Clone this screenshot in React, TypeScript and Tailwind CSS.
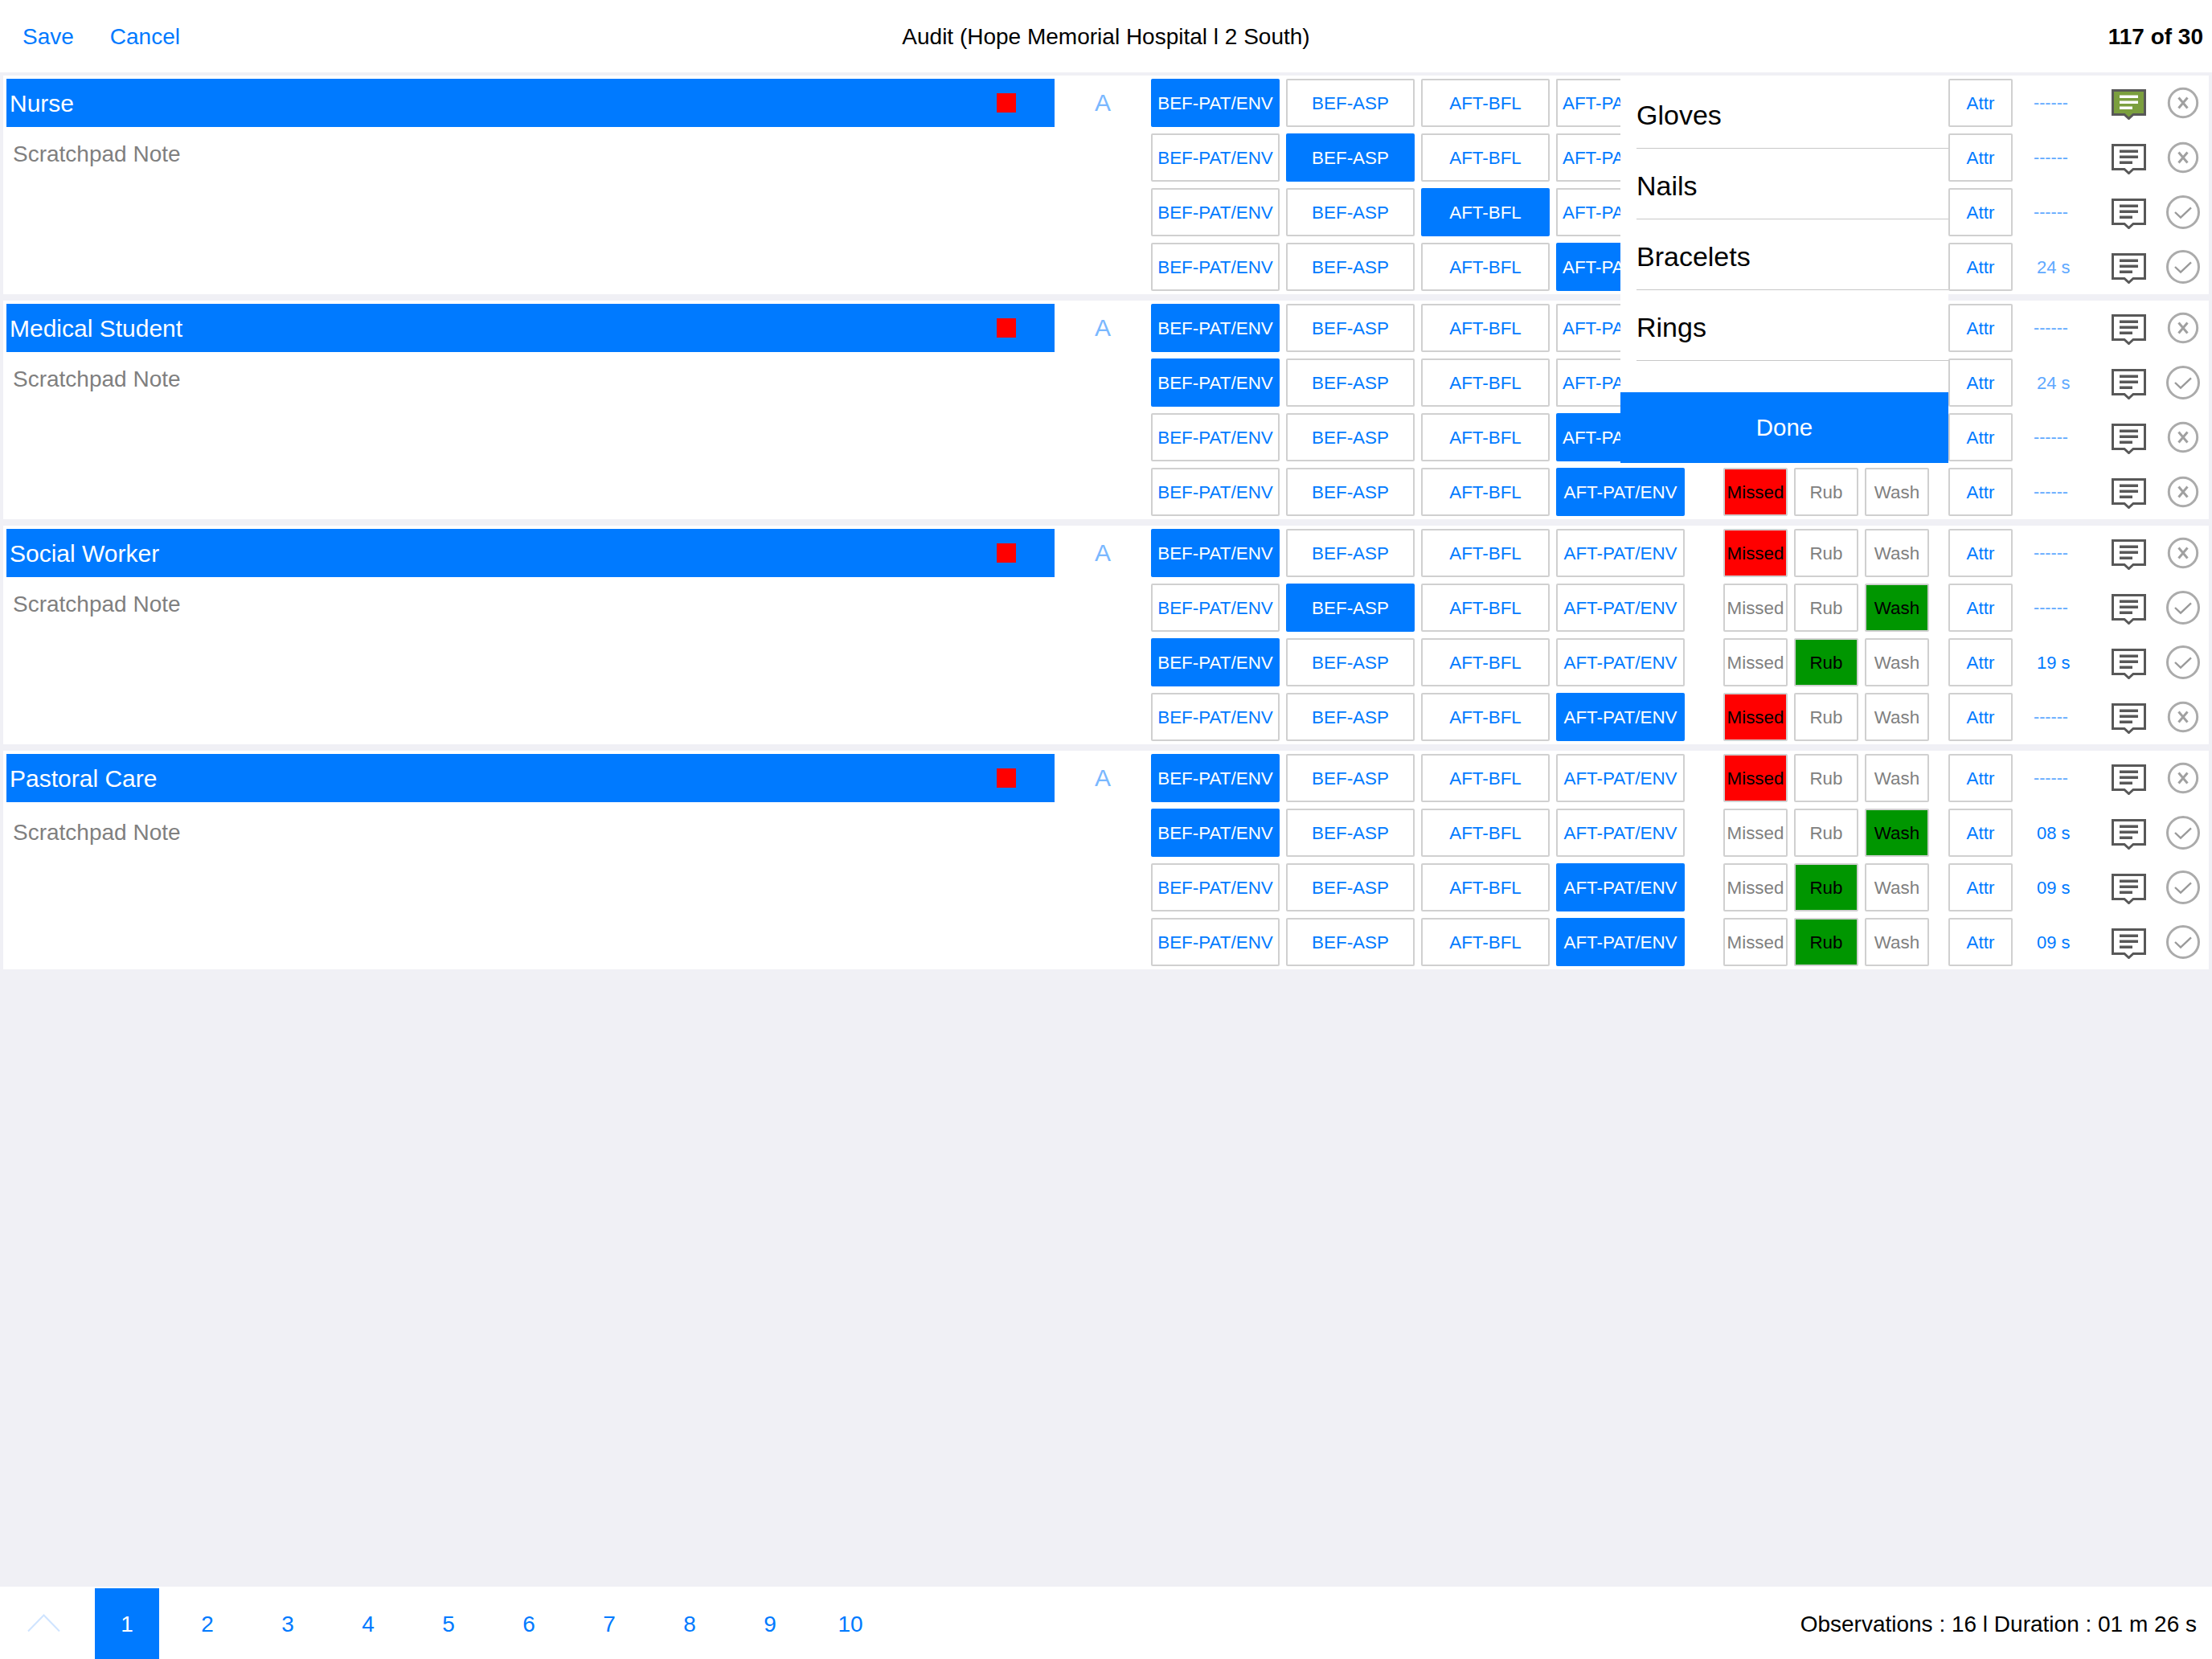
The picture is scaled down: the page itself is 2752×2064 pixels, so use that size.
const ACTIONS = ['BEF-PAT/ENV', 'BEF-ASP', 'AFT-BFL', 'AFT-PAT/ENV'];
const pages = ['1', '2', '3', '4', '5', '6', '7', '8', '9', '10'];

type Row = {
  action: number;
  status: 'Missed' | 'Rub' | 'Wash';
  time?: string;
  faded?: boolean;
  ok?: boolean;
  noted?: boolean;
  covered?: boolean; // sits under the checklist popover
};

const cards: { title: string; rows: Row[]; noteClass: string }[] = [
  {
    title: 'Nurse',
    noteClass: 'mt-[17px]',
    rows: [
      { action: 0, status: 'Missed', noted: true, covered: true },
      { action: 1, status: 'Missed', covered: true },
      { action: 2, status: 'Rub', ok: true, covered: true },
      { action: 3, status: 'Rub', time: '24 s', faded: true, ok: true, covered: true },
    ],
  },
  {
    title: 'Medical Student',
    noteClass: 'mt-[17px]',
    rows: [
      { action: 0, status: 'Missed', covered: true },
      { action: 0, status: 'Rub', time: '24 s', faded: true, ok: true, covered: true },
      { action: 3, status: 'Missed', covered: true },
      { action: 3, status: 'Missed' },
    ],
  },
  {
    title: 'Social Worker',
    noteClass: 'mt-[17px]',
    rows: [
      { action: 0, status: 'Missed' },
      { action: 1, status: 'Wash', ok: true },
      { action: 0, status: 'Rub', time: '19 s', ok: true },
      { action: 3, status: 'Missed' },
    ],
  },
  {
    title: 'Pastoral Care',
    noteClass: 'mt-[21px]',
    rows: [
      { action: 0, status: 'Missed' },
      { action: 0, status: 'Wash', time: '08 s', ok: true },
      { action: 3, status: 'Rub', time: '09 s', ok: true },
      { action: 3, status: 'Rub', time: '09 s', ok: true },
    ],
  },
];

function CommentIcon({ noted }: { noted?: boolean }) {
  const lines = noted ? '#ffffff' : '#585858';
  return (
    <svg width="43" height="38" viewBox="0 0 43 38" className="mt-[4px] ml-[7px] shrink-0">
      <path
        d="M1.5 1.5H41.5V31.5H27L21.5 36.5L16 31.5H1.5Z"
        fill={noted ? '#7b9f3e' : '#ffffff'}
        stroke="#585858"
        strokeWidth="3"
      />
      <rect x="10" y="7.5" width="23" height="3.5" fill={lines} />
      <rect x="10" y="14.5" width="23" height="3.5" fill={lines} />
      <rect x="10" y="21.5" width="16" height="3.5" fill={lines} />
    </svg>
  );
}

function ResultIcon({ ok }: { ok?: boolean }) {
  return (
    <svg width="42" height="42" viewBox="0 0 42 42" className="ml-[25px] shrink-0">
      {ok ? (
        <>
          <circle cx="21" cy="21" r="19.5" fill="none" stroke="#ababab" strokeWidth="3" />
          <path d="M11 21L18 27.7L31 15.3" fill="none" stroke="#9a9a9a" strokeWidth="2.4" />
        </>
      ) : (
        <>
          <circle cx="21" cy="21" r="17.7" fill="none" stroke="#ababab" strokeWidth="3" />
          <path d="M15.5 14.5L26.5 27.5M26.5 14.5L15.5 27.5" fill="none" stroke="#a0a0a0" strokeWidth="3" />
        </>
      )}
    </svg>
  );
}

function ActionButton({ label, active, clipped }: { label: string; active: boolean; clipped?: boolean }) {
  const tone = active ? 'bg-[#007aff] text-white' : 'border-2 border-[#d0d0d0] bg-white text-[#007aff]';
  if (clipped) {
    return (
      <div
        className={`flex h-[60px] w-[80px] items-center overflow-hidden rounded-l-[2px] border-r-0 pt-[1px] text-[22.4px] whitespace-nowrap ${
          active ? 'pl-[8px]' : 'pl-[6px]'
        } ${tone}`}
      >
        {label}
      </div>
    );
  }
  return (
    <div className={`flex h-[60px] w-[160px] items-center justify-center rounded-[2px] pt-[1px] text-[22.4px] ${tone}`}>
      {label}
    </div>
  );
}

function StatusButton({ label, selected }: { label: Row['status']; selected: boolean }) {
  const fill = label === 'Missed' ? 'bg-[#ff0000] text-black' : 'bg-[#009600] text-black';
  return (
    <div
      className={`flex h-[60px] w-[80px] items-center justify-center rounded-[2px] border-2 border-[#d0d0d0] pt-[1px] text-[22.4px] ${
        selected ? fill : 'bg-white text-[#808080]'
      }`}
    >
      {label}
    </div>
  );
}

function AuditRow({ row }: { row: Row }) {
  return (
    <div className="flex h-[60px] items-center">
      <div className="flex w-[664px] gap-2">
        {ACTIONS.map((label, i) => (
          <ActionButton key={label} label={label} active={row.action === i} clipped={row.covered && i === 3} />
        ))}
      </div>
      <div className="ml-12 flex w-[256px] gap-2">
        {!row.covered && (
          <>
            <StatusButton label="Missed" selected={row.status === 'Missed'} />
            <StatusButton label="Rub" selected={row.status === 'Rub'} />
            <StatusButton label="Wash" selected={row.status === 'Wash'} />
          </>
        )}
      </div>
      <div className="ml-6 flex h-[60px] w-[80px] items-center justify-center rounded-[2px] border-2 border-[#d0d0d0] pt-[1px] text-[22.4px] text-[#007aff]">
        Attr
      </div>
      {row.time ? (
        <div className={`w-[116px] pt-[1px] pl-[30px] text-[22px] ${row.faded ? 'text-[#5fa9ff]' : 'text-[#007aff]'}`}>
          {row.time}
        </div>
      ) : (
        <div className="w-[116px] pl-[26px] text-[21.5px] text-[#5fa9ff]">------</div>
      )}
      <CommentIcon noted={row.noted} />
      <ResultIcon ok={row.ok} />
    </div>
  );
}

function AuditCard({ title, rows, noteClass }: { title: string; rows: Row[]; noteClass: string }) {
  return (
    <div className="mx-1 flex h-[272px] bg-white py-1 pl-1">
      <div className="w-[1304px]">
        <div className="flex h-[60px] items-center justify-between bg-[#007aff] pr-[48px] pl-[4px] text-[30px] text-white">
          <span className="pt-[1px]">{title}</span>
          <span className="h-6 w-6 bg-[#ff0000]" />
        </div>
        <div className={`pl-[8px] text-[28px] leading-[34px] text-[#7f7f7f] ${noteClass}`}>Scratchpad Note</div>
      </div>
      <div className="flex h-[58px] w-[120px] items-center justify-center text-[30px] text-[#7ab8ff]">A</div>
      <div className="flex flex-col gap-2">
        {rows.map((row, i) => (
          <AuditRow key={i} row={row} />
        ))}
      </div>
    </div>
  );
}

export default function App() {
  return (
    <div className="relative flex h-[2064px] w-[2752px] flex-col overflow-hidden bg-[#f0f0f5] font-['Liberation_Sans',Arial,sans-serif] antialiased">
      <header className="grid h-[90px] shrink-0 grid-cols-[1fr_auto_1fr] items-center bg-white px-[28px] pt-[2px] text-[28px]">
        <div className="flex gap-[45px] text-[#007aff]">
          <span>Save</span>
          <span>Cancel</span>
        </div>
        <div className="text-black">Audit (Hope Memorial Hospital l 2 South)</div>
        <div className="-mr-[17px] text-right font-bold text-black">117 of 30</div>
      </header>

      <main className="flex flex-1 flex-col gap-2 pt-1">
        {cards.map((card) => (
          <AuditCard key={card.title} {...card} />
        ))}
      </main>

      <footer className="flex h-[90px] shrink-0 items-end bg-white pr-[19px] text-[28px]">
        <svg width="41" height="22" viewBox="0 0 41 22" className="mb-[34px] ml-[34px] shrink-0">
          <path d="M1 21.5L20.5 1.5L40 21.5" fill="none" stroke="#cfe4ff" strokeWidth="2" />
        </svg>
        <nav className="ml-[43px] flex gap-5">
          {pages.map((page) => (
            <div
              key={page}
              className={`flex h-[88px] w-[80px] items-center justify-center pt-[2px] ${
                page === '1' ? 'bg-[#007aff] text-white' : 'text-[#007aff]'
              }`}
            >
              {page}
            </div>
          ))}
        </nav>
        <div className="ml-auto flex h-[88px] items-center pt-[2px] text-black">
          Observations : 16 l Duration : 01 m 26 s
        </div>
      </footer>

      <div className="absolute top-[94px] left-[2016px] w-[408px] bg-white">
        {['Gloves', 'Nails', 'Bracelets', 'Rings'].map((item) => (
          <div
            key={item}
            className="ml-5 flex h-[88px] items-center border-b border-[#c8c8c8] pt-[5px] text-[34px] text-black first:h-[91px] first:pt-[8px]"
          >
            {item}
          </div>
        ))}
        <div className="mt-[39px] flex h-[88px] items-center justify-center bg-[#007aff] pt-[1px] text-[29.5px] text-white">
          Done
        </div>
      </div>
    </div>
  );
}
